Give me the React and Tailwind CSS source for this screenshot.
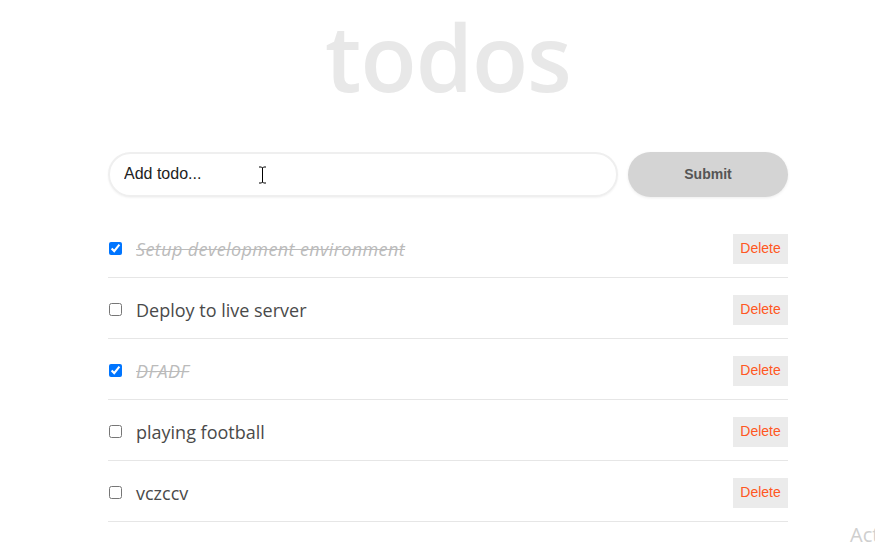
import { useState } from "react";

const initialTodos = [
  { id: 1, title: "Setup development environment", completed: true },
  { id: 2, title: "Deploy to live server", completed: false },
  { id: 3, title: "DFADF", completed: true },
  { id: 4, title: "playing football", completed: false },
  { id: 5, title: "vczccv", completed: false },
];

function TodoItem({ todo, onToggle, onDelete }) {
  return (
    <li className="flex items-center pt-[17px] pb-[13px] border-b border-[#e6e6e6]">
      <input
        type="checkbox"
        checked={todo.completed}
        onChange={() => onToggle(todo.id)}
        className="w-[13px] h-[13px] m-0 ml-px accent-[#0075ff]"
      />
      <span
        className={`flex-1 ml-[14px] text-[18px] leading-[30px] ${
          todo.completed
            ? "italic line-through text-[#bbbbbb] tracking-[0.4px]"
            : "text-[#4a4a4a]"
        }`}
      >
        {todo.title}
      </span>
      <button
        onClick={() => onDelete(todo.id)}
        className="w-[55px] h-[30px] bg-[#ebebeb] text-[#ff5722] text-[14px] font-['Liberation_Sans',Arial,sans-serif]"
      >
        Delete
      </button>
    </li>
  );
}

export default function App() {
  const [todos, setTodos] = useState(initialTodos);
  const [text, setText] = useState("");

  const toggle = (id) =>
    setTodos(todos.map((t) => (t.id === id ? { ...t, completed: !t.completed } : t)));
  const remove = (id) => setTodos(todos.filter((t) => t.id !== id));

  return (
    <div className="relative h-[545px] bg-white overflow-hidden font-['Open_Sans',sans-serif]">
      <div className="w-[680px] ml-[108px]">
        <h1 className="text-center text-[92px] leading-[1.15] font-semibold text-[#e8e8e8] pt-[4px] pb-[42px] tracking-[-1px]">
          todos
        </h1>

        <form
          className="flex gap-[10px]"
          onSubmit={(e) => {
            e.preventDefault();
            if (!text.trim()) return;
            setTodos([...todos, { id: Date.now(), title: text, completed: false }]);
            setText("");
          }}
        >
          <input
            value={text}
            onChange={(e) => setText(e.target.value)}
            placeholder="Add todo..."
            className="w-[510px] h-[45px] rounded-full border-2 border-[#efefef] px-[14px] text-[16px] text-[#222] placeholder:text-[#222] outline-none shadow-[0_1px_2px_rgba(0,0,0,0.05)] font-['Liberation_Sans',Arial,sans-serif]"
          />
          <button
            type="submit"
            className="w-[160px] h-[45px] rounded-full bg-[#d4d4d4] text-[#555] text-[14px] font-bold shadow-[0_1px_3px_rgba(0,0,0,0.08)] font-['Liberation_Sans',Arial,sans-serif]"
          >
            Submit
          </button>
        </form>

        <ul className="mt-[20px]">
          {todos.map((todo) => (
            <TodoItem key={todo.id} todo={todo} onToggle={toggle} onDelete={remove} />
          ))}
        </ul>
      </div>

      <svg className="absolute left-[258px] top-[166px]" width="9" height="18" viewBox="0 0 9 18">
        <path d="M1 1h2.5L4.5 2l1-1H8M4.5 2v14M1 17h2.5l1-1 1 1H8" fill="none" stroke="#000" strokeWidth="1" />
      </svg>

      <span className="absolute left-[850px] top-[520px] text-[20px] text-[#cfcfcf] whitespace-nowrap">
        Act
      </span>
    </div>
  );
}
